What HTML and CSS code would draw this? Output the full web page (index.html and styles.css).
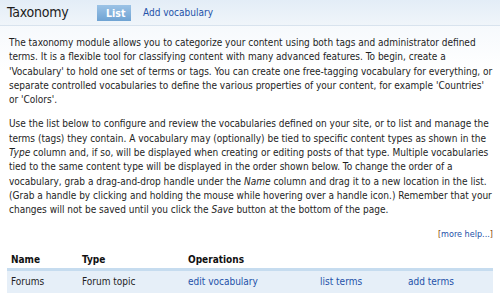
FILE: index.html
```html
<!DOCTYPE html>
<html>
<head>
<meta charset="utf-8">
<link rel="stylesheet" href="styles.css">
</head>
<body>
<div class="header">
  <h1 class="title">Taxonomy</h1>
  <ul class="tabs">
    <li class="tab active"><a href="#">List</a></li>
    <li class="tab"><a href="#">Add vocabulary</a></li>
  </ul>
</div>
<div class="content">
  <p>The taxonomy module allows you to categorize your content using both tags and administrator defined terms. It is a flexible tool for classifying content with many advanced features. To begin, create a 'Vocabulary' to hold one set of terms or tags. You can create one free-tagging vocabulary for everything, or separate controlled vocabularies to define the various properties of your content, for example 'Countries' or 'Colors'.</p>
  <p>Use the list below to configure and review the vocabularies defined on your site, or to list and manage the terms (tags) they contain. A vocabulary may (optionally) be tied to specific content types as shown in the <em>Type</em> column and, if so, will be displayed when creating or editing posts of that type. Multiple vocabularies tied to the same content type will be displayed in the order shown below. To change the order of a vocabulary, grab a drag-and-drop handle under the <em>Name</em> column and drag it to a new location in the list. (Grab a handle by clicking and holding the mouse while hovering over a handle icon.) Remember that your changes will not be saved until you click the <em>Save</em> button at the bottom of the page.</p>
  <div class="more-help">[<a href="#">more help...</a>]</div>
  <table class="vocab">
    <thead>
      <tr><th class="c-name">Name</th><th class="c-type">Type</th><th colspan="3">Operations</th></tr>
    </thead>
    <tbody>
      <tr class="odd"><td>Forums</td><td>Forum topic</td><td class="c-op1"><a href="#">edit vocabulary</a></td><td class="c-op2"><a href="#">list terms</a></td><td><a href="#">add terms</a></td></tr>
    </tbody>
  </table>
</div>
</body>
</html>
```

FILE: styles.css
```css
html, body {
  margin: 0;
  padding: 0;
  background: #ffffff;
}
body {
  font-family: "DejaVu Sans Condensed", "DejaVu Sans", sans-serif;
  font-size: 10px;
  color: #1e1e1e;
  background: linear-gradient(to bottom, #f1f6fb 0px, #ffffff 70px);
}
a {
  color: #2451a8;
  text-decoration: none;
}
.header {
  display: flex;
  align-items: center;
  height: 25px;
  padding-left: 7px;
  border-bottom: 1px solid #d8e3ee;
  background: linear-gradient(to bottom, #e3edf7, #f0f5fa);
}
.title {
  margin: 0 0 1px 0;
  font-weight: normal;
  font-size: 14px;
  letter-spacing: -0.2px;
  color: #1c1c1c;
  width: 90px;
}
.tabs {
  display: flex;
  align-items: center;
  list-style: none;
  margin: 0;
  padding: 0;
  gap: 12px;
}
.tab a {
  display: block;
  font-size: 10px;
  line-height: 16px;
}
.tab.active a {
  color: #ffffff;
  font-weight: bold;
  font-size: 10.5px;
  padding: 0 9px;
  width: 16px;
  text-align: center;
  background: linear-gradient(to bottom, #9cc3e6, #6fa3d3);
}
.content {
  padding: 0 7px 0 9px;
}
.content p {
  margin: 0 0 10px 0;
  line-height: 14.3px;
}
.content p:first-child {
  margin-top: 10px;
}
.more-help {
  text-align: right;
  font-size: 9px;
  color: #8a4b0c;
  margin-top: 11px;
}
.vocab {
  margin-top: 12px;
  margin-left: -2px;
  width: 486px;
  border-collapse: collapse;
}
.vocab th {
  text-align: left;
  font-weight: bold;
  color: #111111;
  padding: 3px 4px 3px 4px;
  border-bottom: 3px solid #c6dcef;
}
.vocab td {
  padding: 4px 4px 4px 4px;
  height: 14px;
  background: #e6eff8;
}
.c-name { width: 63px; }
.c-type { width: 98px; }
.c-op1 { width: 124px; }
.c-op2 { width: 80px; }
```
